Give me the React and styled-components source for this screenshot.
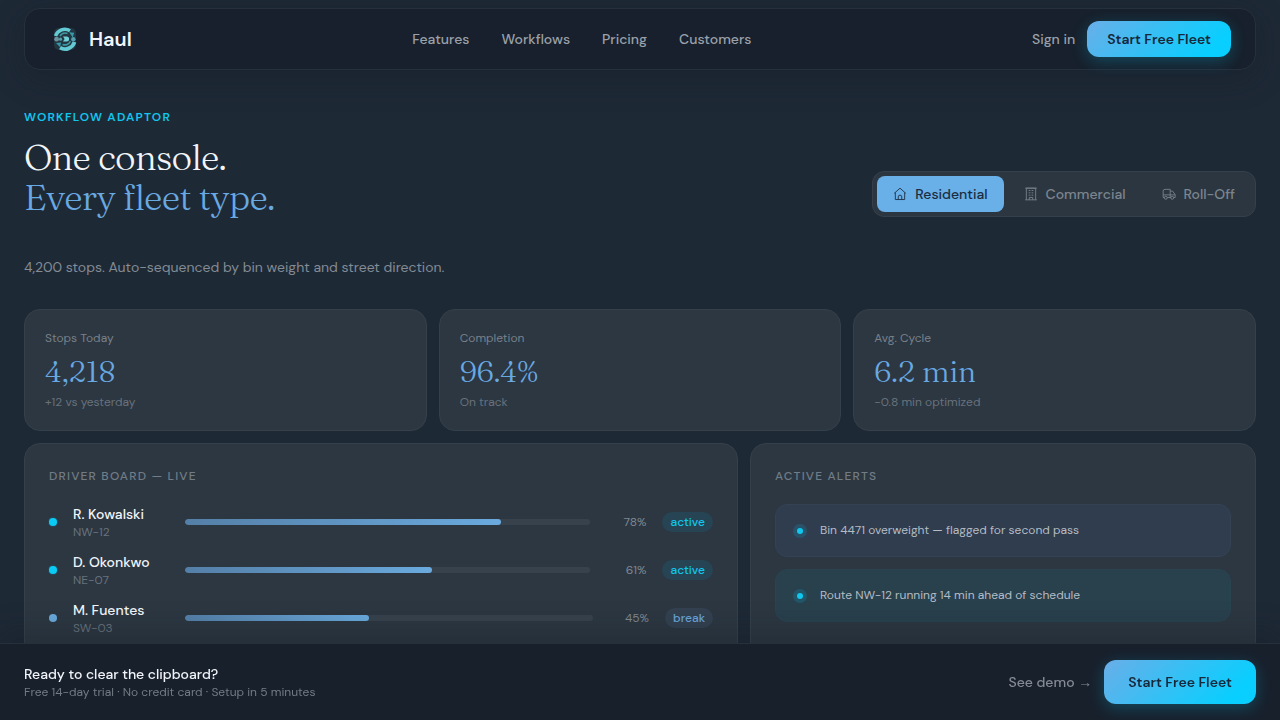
import React, { useState } from 'react'
import styled, { createGlobalStyle } from 'styled-components'

const drivers = [
    { name: 'R. Kowalski', route: 'NW-12', progress: 78, status: 'active' },
    { name: 'D. Okonkwo', route: 'NE-07', progress: 61, status: 'active' },
    { name: 'M. Fuentes', route: 'SW-03', progress: 45, status: 'break' },
]

const stats = [
    { label: 'Stops Today', value: '4,218', note: '+12 vs yesterday' },
    { label: 'Completion', value: '96.4%', note: 'On track' },
    { label: 'Avg. Cycle', value: '6.2 min', note: '-0.8 min optimized' },
]

const alerts = [
    { text: 'Bin 4471 overweight — flagged for second pass', kind: 'info' },
    { text: 'Route NW-12 running 14 min ahead of schedule', kind: 'good' },
]

const Logo = () => (
    <svg width="24" height="24" viewBox="0 0 24 24" fill="none" aria-hidden="true">
        <rect x="1" y="1" width="22" height="22" rx="5" fill="#2b4650" opacity="0.6" />
        <path d="M2.500 9A9.800 9.800 0 0 1 17 3.800" stroke="#63c9d2" strokeWidth="3.400" />
        <path d="M21.500 15A9.800 9.800 0 0 1 7 20.600" stroke="#63c9d2" strokeWidth="3.800" />
        <path d="M7 9.200A6 6 0 0 1 14.500 6.400M17.400 14.200A6 6 0 0 1 9.600 17.400" stroke="#3d97a3" strokeWidth="1.600" />
        <path d="M16.200 5.200l5 .6-1.500 4.800zM3 16l5-.6-.8 4.800z" fill="#359aa7" />
        <path d="M10 9.600h3.600a2.500 2.500 0 0 1 0 5H10l1.600-2.500z" fill="#70d0d8" />
        <circle cx="3.600" cy="12.200" r="2.400" fill="#6a929e" />
        <circle cx="20.300" cy="12.200" r="2.200" fill="#549eae" />
        <circle cx="7.500" cy="12.200" r="1.600" fill="#519dad" />
    </svg>
)

const HomeIcon = () => (
    <svg width="14" height="14" viewBox="0 0 24 24" fill="none" stroke="currentColor" strokeWidth="1.500" strokeLinejoin="round" aria-hidden="true">
        <path d="M2 11 12 2l10 9M4 9.500V21.500h16V9.500M9 21.500V17a3 3 0 0 1 6 0v4.500" />
    </svg>
)

const BuildingIcon = () => (
    <svg width="14" height="14" viewBox="0 0 24 24" fill="none" stroke="currentColor" strokeWidth="1.500" aria-hidden="true">
        <path d="M4 22V2h16v20M2 22h20M2 2h20M8 6h3M13 6h3M8 10h3M13 10h3M8 14h3M13 14h3M9 22v-4h6v4" />
    </svg>
)

const TruckIcon = () => (
    <svg width="14" height="14" viewBox="0 0 24 24" fill="none" stroke="currentColor" strokeWidth="1.500" strokeLinejoin="round" aria-hidden="true">
        <path d="M4 18H2V7a3 3 0 0 1 3-3h9v14H9M14 7h4l4.500 6v5H20M15 18h-1M2 13.500h20.500" />
        <circle cx="6.500" cy="18.500" r="2.500" />
        <circle cx="17.500" cy="18.500" r="2.500" />
    </svg>
)

const tabs = [
    { label: 'Residential', Icon: HomeIcon },
    { label: 'Commercial', Icon: BuildingIcon },
    { label: 'Roll-Off', Icon: TruckIcon },
]

const App = () => {
    const [tab, setTab] = useState('Residential')

    return (
        <>
            <GlobalStyle />
            <Header>
                <Brand href="#"><Logo />Haul</Brand>
                <Nav>
                    <NavLink href="#features">Features</NavLink>
                    <NavLink href="#workflows">Workflows</NavLink>
                    <NavLink href="#pricing">Pricing</NavLink>
                    <NavLink href="#customers">Customers</NavLink>
                </Nav>
                <Actions>
                    <NavLink href="#signin">Sign in</NavLink>
                    <Cta>Start Free Fleet</Cta>
                </Actions>
            </Header>
            <Main>
                <Eyebrow>Workflow Adaptor</Eyebrow>
                <Intro>
                    <Title>One console.<br /><span>Every fleet type.</span></Title>
                    <Switcher>
                        {tabs.map(({ label, Icon }) => (
                            <Tab key={label} $active={tab === label} aria-pressed={tab === label} onClick={() => setTab(label)}>
                                <Icon />{label}
                            </Tab>
                        ))}
                    </Switcher>
                </Intro>
                <Lead>4,200 stops. Auto-sequenced by bin weight and street direction.</Lead>
                <Stats>
                    {stats.map((s) => (
                        <Stat key={s.label}>
                            <Small>{s.label}</Small>
                            <Value>{s.value}</Value>
                            <Note>{s.note}</Note>
                        </Stat>
                    ))}
                </Stats>
                <Panels>
                    <Panel>
                        <PanelTitle>Driver Board — Live</PanelTitle>
                        <Drivers>
                            {drivers.map((d) => (
                                <Driver key={d.name}>
                                    <Dot $status={d.status} />
                                    <Who>
                                        <Name>{d.name}</Name>
                                        <Route>{d.route}</Route>
                                    </Who>
                                    <Track><Bar style={{ width: `${d.progress}%` }} /></Track>
                                    <Percent>{d.progress}%</Percent>
                                    <Badge $status={d.status}>{d.status}</Badge>
                                </Driver>
                            ))}
                        </Drivers>
                    </Panel>
                    <Panel>
                        <PanelTitle>Active Alerts</PanelTitle>
                        <Alerts>
                            {alerts.map((a) => (
                                <Alert key={a.text} $kind={a.kind}><AlertDot />{a.text}</Alert>
                            ))}
                        </Alerts>
                    </Panel>
                </Panels>
            </Main>
            <BottomBar>
                <div>
                    <BarTitle>Ready to clear the clipboard?</BarTitle>
                    <BarText>Free 14-day trial · No credit card · Setup in 5 minutes</BarText>
                </div>
                <Actions>
                    <Demo href="#demo">See demo <Arrow>→</Arrow></Demo>
                    <Cta $large>Start Free Fleet</Cta>
                </Actions>
            </BottomBar>
        </>
    )
}

export default App

const GlobalStyle = createGlobalStyle`
*{
    box-sizing: border-box;
}
html{
    scrollbar-width: none;
}
body{
    margin: 0;
    background: #1e2936;
    color: #f1f5f9;
    font-family: 'DM Sans', 'Open Sans', sans-serif;
    font-size: 14px;
    line-height: 20px;
}
button{
    font-family: inherit;
    cursor: pointer;
}
a{
    text-decoration: none;
}
`
const Header=styled.header`
position: sticky;
top: 8px;
z-index: 2;
display: flex;
align-items: center;
justify-content: space-between;
margin: 8px 24px 0;
padding: 12px 24px 12px 28px;
border: 1px solid #25303c;
border-radius: 16px;
background: #17202c;
box-shadow: 0 8px 32px rgba(15, 23, 34, 0.3);
`
const Brand=styled.a`
display: flex;
align-items: center;
gap: 12px;
color: #f1f5fb;
font-size: 20px;
font-weight: 600;
line-height: 28px;
`
const Nav=styled.nav`
display: flex;
gap: 32px;
`
const NavLink=styled.a`
color: #9ba1aa;
font-size: 14px;
font-weight: 500;
`
const Actions=styled.div`
display: flex;
align-items: center;
gap: 12px;
`
const Cta=styled.button`
height: ${p => (p.$large ? '44px' : '36px')};
padding: 0 ${p => (p.$large ? '24px' : '20px')};
border: 0;
border-radius: 12px;
background: linear-gradient(135deg, #6aaee8, #08cfff 85%);
box-shadow: 0 4px 16px rgba(0, 207, 255, 0.24);
color: #17283a;
font-size: 14px;
font-weight: 600;
`
const Main=styled.main`
padding: 39px 24px 96px;
`
const Eyebrow=styled.p`
margin: 0;
color: #0fc6ee;
font-size: 12px;
font-weight: 600;
line-height: 16px;
letter-spacing: 0.1em;
text-transform: uppercase;
`
const Intro=styled.div`
display: flex;
align-items: flex-end;
justify-content: space-between;
margin-top: 12px;
`
const Title=styled.h1`
margin: 0;
font-family: Fraunces, 'Liberation Serif', serif;
font-size: 36px;
font-weight: 300;
font-variation-settings: 'opsz' 144;
line-height: 40px;
letter-spacing: -0.02em;
span{
    color: #69a9e2;
}
`
const Switcher=styled.div`
display: flex;
gap: 4px;
padding: 4px;
border: 1px solid #35404b;
border-radius: 12px;
background: #2b3641;
`
const Tab=styled.button`
display: flex;
align-items: center;
gap: 8px;
height: 36px;
padding: 0 16px;
border: 0;
border-radius: 8px;
background: ${p => (p.$active ? '#69afe8' : 'transparent')};
color: ${p => (p.$active ? '#1b2d40' : '#7c858e')};
font-size: 14px;
font-weight: 500;
`
const Lead=styled.p`
margin: 40px 0 32px;
color: #838b94;
`
const Card=styled.section`
border: 1px solid #35404b;
border-radius: 16px;
background: #2c3742;
`
const Stats=styled.div`
display: grid;
grid-template-columns: repeat(3, 1fr);
gap: 12px;
`
const Stat=styled(Card)`
padding: 20px;
`
const Small=styled.div`
color: #78818a;
font-size: 12px;
line-height: 16px;
`
const Value=styled.div`
margin: 8px 0 4px;
color: #69a9e2;
font-family: Fraunces, 'Liberation Serif', serif;
font-size: 30px;
font-weight: 300;
font-variation-settings: 'opsz' 144;
line-height: 36px;
`
const Note=styled(Small)`
color: #68727c;
`
const Panels=styled.div`
display: grid;
grid-template-columns: 714fr 506fr;
gap: 12px;
margin-top: 12px;
`
const Panel=styled(Card)`
padding: 24px;
`
const PanelTitle=styled.h2`
margin: 0;
color: #727c86;
font-size: 12px;
font-weight: 500;
line-height: 16px;
letter-spacing: 0.1em;
text-transform: uppercase;
`
const Drivers=styled.div`
display: grid;
gap: 12px;
margin-top: 20px;
`
const Driver=styled.div`
display: flex;
align-items: center;
gap: 16px;
height: 36px;
`
const Dot=styled.span`
width: 8px;
height: 8px;
border-radius: 50%;
background: ${p => (p.$status === 'active' ? '#0acbf5' : '#69a9dc')};
box-shadow: ${p => (p.$status === 'active' ? '0 0 2px rgba(0, 207, 255, 0.4)' : 'none')};
`
const Who=styled.div`
width: 96px;
`
const Name=styled.div`
font-weight: 500;
`
const Route=styled(Small)`
color: #68727c;
`
const Track=styled.div`
flex: 1;
height: 6px;
overflow: hidden;
border-radius: 3px;
background: #37424d;
`
const Bar=styled.div`
height: 100%;
border-radius: 3px;
background: linear-gradient(90deg, #547fa7, #6aaade);
`
const Percent=styled.span`
width: 40px;
color: #7f8891;
font-size: 12px;
text-align: right;
`
const Badge=styled.span`
padding: 2px 8px;
border-radius: 10px;
background: ${p => (p.$status === 'active' ? '#264454' : '#334150')};
color: ${p => (p.$status === 'active' ? '#12c5ed' : '#69a5da')};
font-size: 12px;
font-weight: 500;
line-height: 16px;
`
const Alerts=styled.div`
display: grid;
gap: 12px;
margin-top: 20px;
`
const Alert=styled.div`
display: flex;
align-items: center;
gap: 12px;
padding: 16px;
border: 1px solid ${p => (p.$kind === 'good' ? '#29434f' : '#344254')};
border-radius: 12px;
background: ${p => (p.$kind === 'good' ? '#29404d' : '#2f3d4f')};
color: #b5bcc4;
font-size: 12px;
line-height: 19px;
`
const AlertDot=styled.span`
width: 6px;
height: 6px;
margin: 5px;
border-radius: 50%;
background: #10c7ef;
box-shadow: 0 0 0 4px rgba(0, 207, 255, 0.15);
`
const BottomBar=styled.footer`
position: fixed;
right: 0;
bottom: 0;
left: 0;
z-index: 3;
display: flex;
align-items: center;
justify-content: space-between;
padding: 16px 24px;
border-top: 1px solid #26303b;
background: #18202c;
box-shadow: 0 -8px 32px rgba(15, 23, 34, 0.3);
`
const BarTitle=styled.div`
font-weight: 500;
`
const BarText=styled(Small)`
color: #747b85;
`
const Demo=styled(NavLink)`
color: #858b94;
`
const Arrow=styled.span`
font-family: 'Liberation Sans', sans-serif;
`
